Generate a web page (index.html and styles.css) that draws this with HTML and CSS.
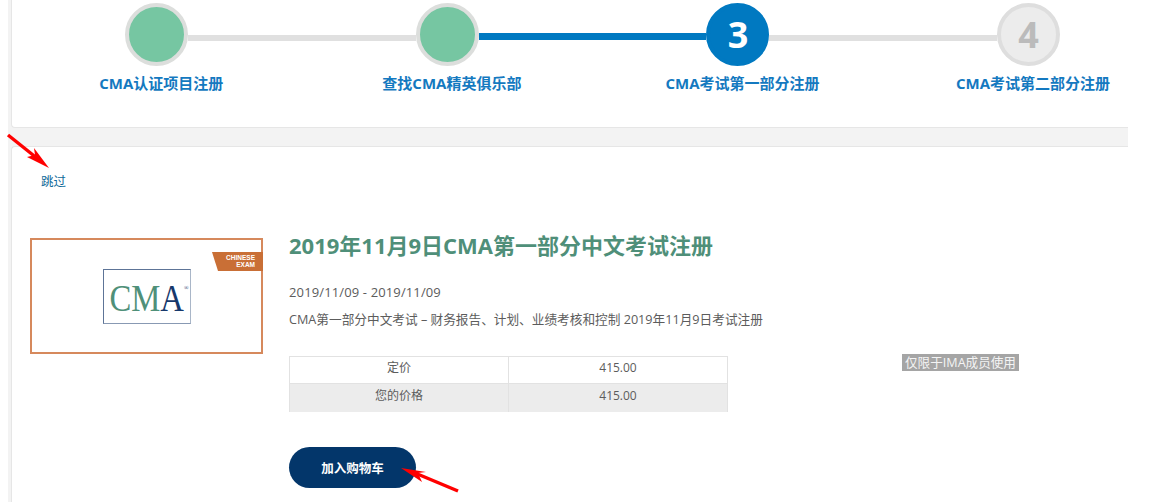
FILE: index.html
```html
<!DOCTYPE html>
<html lang="zh">
<head>
<meta charset="utf-8">
<title>CMA考试第一部分注册</title>
<link rel="stylesheet" href="styles.css">
</head>
<body>
<div class="page">
  <section class="card steps">
    <div class="track">
      <span class="circle done"></span>
      <span class="link"></span>
      <span class="circle done"></span>
      <span class="link active"></span>
      <span class="circle current">3</span>
      <span class="link"></span>
      <span class="circle todo">4</span>
    </div>
    <div class="labels">
      <span>CMA认证项目注册</span>
      <span>查找CMA精英俱乐部</span>
      <span>CMA考试第一部分注册</span>
      <span>CMA考试第二部分注册</span>
    </div>
  </section>
  <section class="card main">
    <a class="skip" href="#">跳过</a>
    <div class="product">
      <div class="thumb">
        <div class="ribbon">CHINESE<br>EXAM</div>
        <div class="logo"><span class="word"><span class="cm">CM</span><span class="a">A</span><sup class="reg">®</sup></span></div>
      </div>
      <div class="info">
        <h1>2019年11月9日CMA第一部分中文考试注册</h1>
        <p class="date">2019/11/09 - 2019/11/09</p>
        <p class="desc">CMA第一部分中文考试 – 财务报告、计划、业绩考核和控制 2019年11月9日考试注册</p>
        <div class="price-row">
          <table class="prices">
            <tr><td>定价</td><td>415.00</td></tr>
            <tr class="alt"><td>您的价格</td><td>415.00</td></tr>
          </table>
          <span class="badge">仅限于IMA成员使用</span>
        </div>
        <button class="cart" type="button">加入购物车</button>
      </div>
    </div>
  </section>
  <svg class="arrows" viewBox="0 0 1155 502" width="1155" height="502" aria-hidden="true">
    <path class="shaft" d="M8 135 L38 159"/>
    <path class="head" d="M49 168 L34 148 L35 155 L27 157 Z"/>
    <path class="shaft" d="M458 491 L415 473"/>
    <path class="head" d="M401 468 L426 472 L418 473 L422 482 Z"/>
  </svg>
</div>
</body>
</html>
```
FILE: styles.css
```css
* { box-sizing: border-box; }
html, body { margin: 0; padding: 0; background: #fff; overflow: hidden; }
body { font-family: "Open Sans", "Noto Sans CJK SC", sans-serif; color: #5c5c5c; font-size: 12px; }
.page { position: relative; width: 1120px; height: 502px; margin-left: 8px; padding-left: 3px; background: #f3f3f3; overflow: visible; }
.card { background: #fff; border: 1px solid #e6e6e6; border-right: 0; }
.steps { height: 128px; border-top: 0; border-radius: 0 0 0 4px; padding-top: 3px; }
.main { height: 356px; margin-top: 18px; border-bottom: 0; border-radius: 4px 0 0 0; padding: 26px 0 0 18px; }
.track { display: flex; align-items: flex-start; padding-left: 113px; }
.circle { flex: none; width: 63px; height: 63px; border-radius: 50%; border: 4px solid #dcdedc; display: flex; align-items: center; justify-content: center; font-size: 36px; font-weight: 700; line-height: 1; padding-left: 1px; }
.done { background: #76c6a2; }
.current { background: #0079c1; border-color: #0079c1; color: #fff; }
.todo { background: #ececec; border-color: #dedede; color: #bbb; }
.link { flex: none; width: 227.5px; height: 6px; margin-top: 32px; background: #e0e0e0; }
.link.active { height: 7px; margin-top: 30px; background: #0079c1; }
.labels { display: grid; grid-template-columns: repeat(4, 290.6px); margin-top: 7px; padding-left: 4px; font-size: 15px; font-weight: 700; line-height: 20px; color: #1479c0; text-align: center; }
.skip { display: block; margin-left: 11px; color: #0f6a99; font-size: 12.5px; line-height: 18px; text-decoration: none; }
.product { display: flex; margin-top: 35px; }
.thumb { position: relative; flex: none; width: 233px; height: 116px; margin-top: 12px; border: 2px solid #d6895c; display: flex; }
.ribbon { position: absolute; top: 12px; right: -2px; width: 51px; height: 19px; padding: 2px 8px 0 0; background: #c96f36; clip-path: polygon(0 0, 100% 0, 100% 100%, 6px 100%); color: #fff; font-family: "Liberation Sans", sans-serif; font-size: 6.5px; font-weight: 700; line-height: 7px; text-align: right; }
.logo { width: 88px; height: 55px; margin: 29px 0 0 71px; border: 1px solid #5d7497; border-right-color: #a9b6c8; border-bottom-color: #8899b3; display: flex; align-items: center; justify-content: center; font-family: "Liberation Serif", serif; }
.word { display: block; white-space: nowrap; font-size: 38px; line-height: 38px; transform: scaleX(.86); margin: 2px 0 0 4px; }
.cm { color: #4f9079; }
.a { color: #17386b; }
.reg { font-size: 7px; color: #17386b; line-height: 1; vertical-align: 21px; }
.info { margin-left: 26px; width: 730px; }
h1 { margin: 0; font-size: 22px; line-height: 30px; font-weight: 700; color: #4f8f79; margin-top: 4px; }
.date { margin: 23px 0 0; font-size: 13px; letter-spacing: .13px; line-height: 18px; }
.desc { margin: 9px 0 0; font-size: 12.67px; line-height: 18px; }
.price-row { display: flex; align-items: flex-start; margin-top: 28px; }
.prices { flex: none; width: 439px; height: 55px; border-collapse: collapse; table-layout: fixed; text-align: center; line-height: 18px; }
.prices td { padding: 2px 0 6px; border: 1px solid #e2e2e2; border-bottom: 0; height: 27px; }
.prices tr:first-child td { border-bottom: 1px solid #e2e2e2; }
.prices .alt td { padding: 3px 0 6px; height: 28px; }
.alt { background: #ececec; }
.badge { margin: -2px 0 0 174px; padding: 0 3px; background: #a5a5a5; color: #f4f4f4; font-size: 12.6px; line-height: 17px; white-space: nowrap; }
.cart { display: block; width: 127px; height: 41px; margin-top: 35px; border: 0; border-radius: 21px; background: #03366a; color: #fff; font: 700 12.5px "Open Sans", "Noto Sans CJK SC", sans-serif; }
.arrows { position: absolute; top: 0; left: -8px; pointer-events: none; }
.shaft { fill: none; stroke: #f00; stroke-width: 3.5; }
.head { fill: #f00; }
```
